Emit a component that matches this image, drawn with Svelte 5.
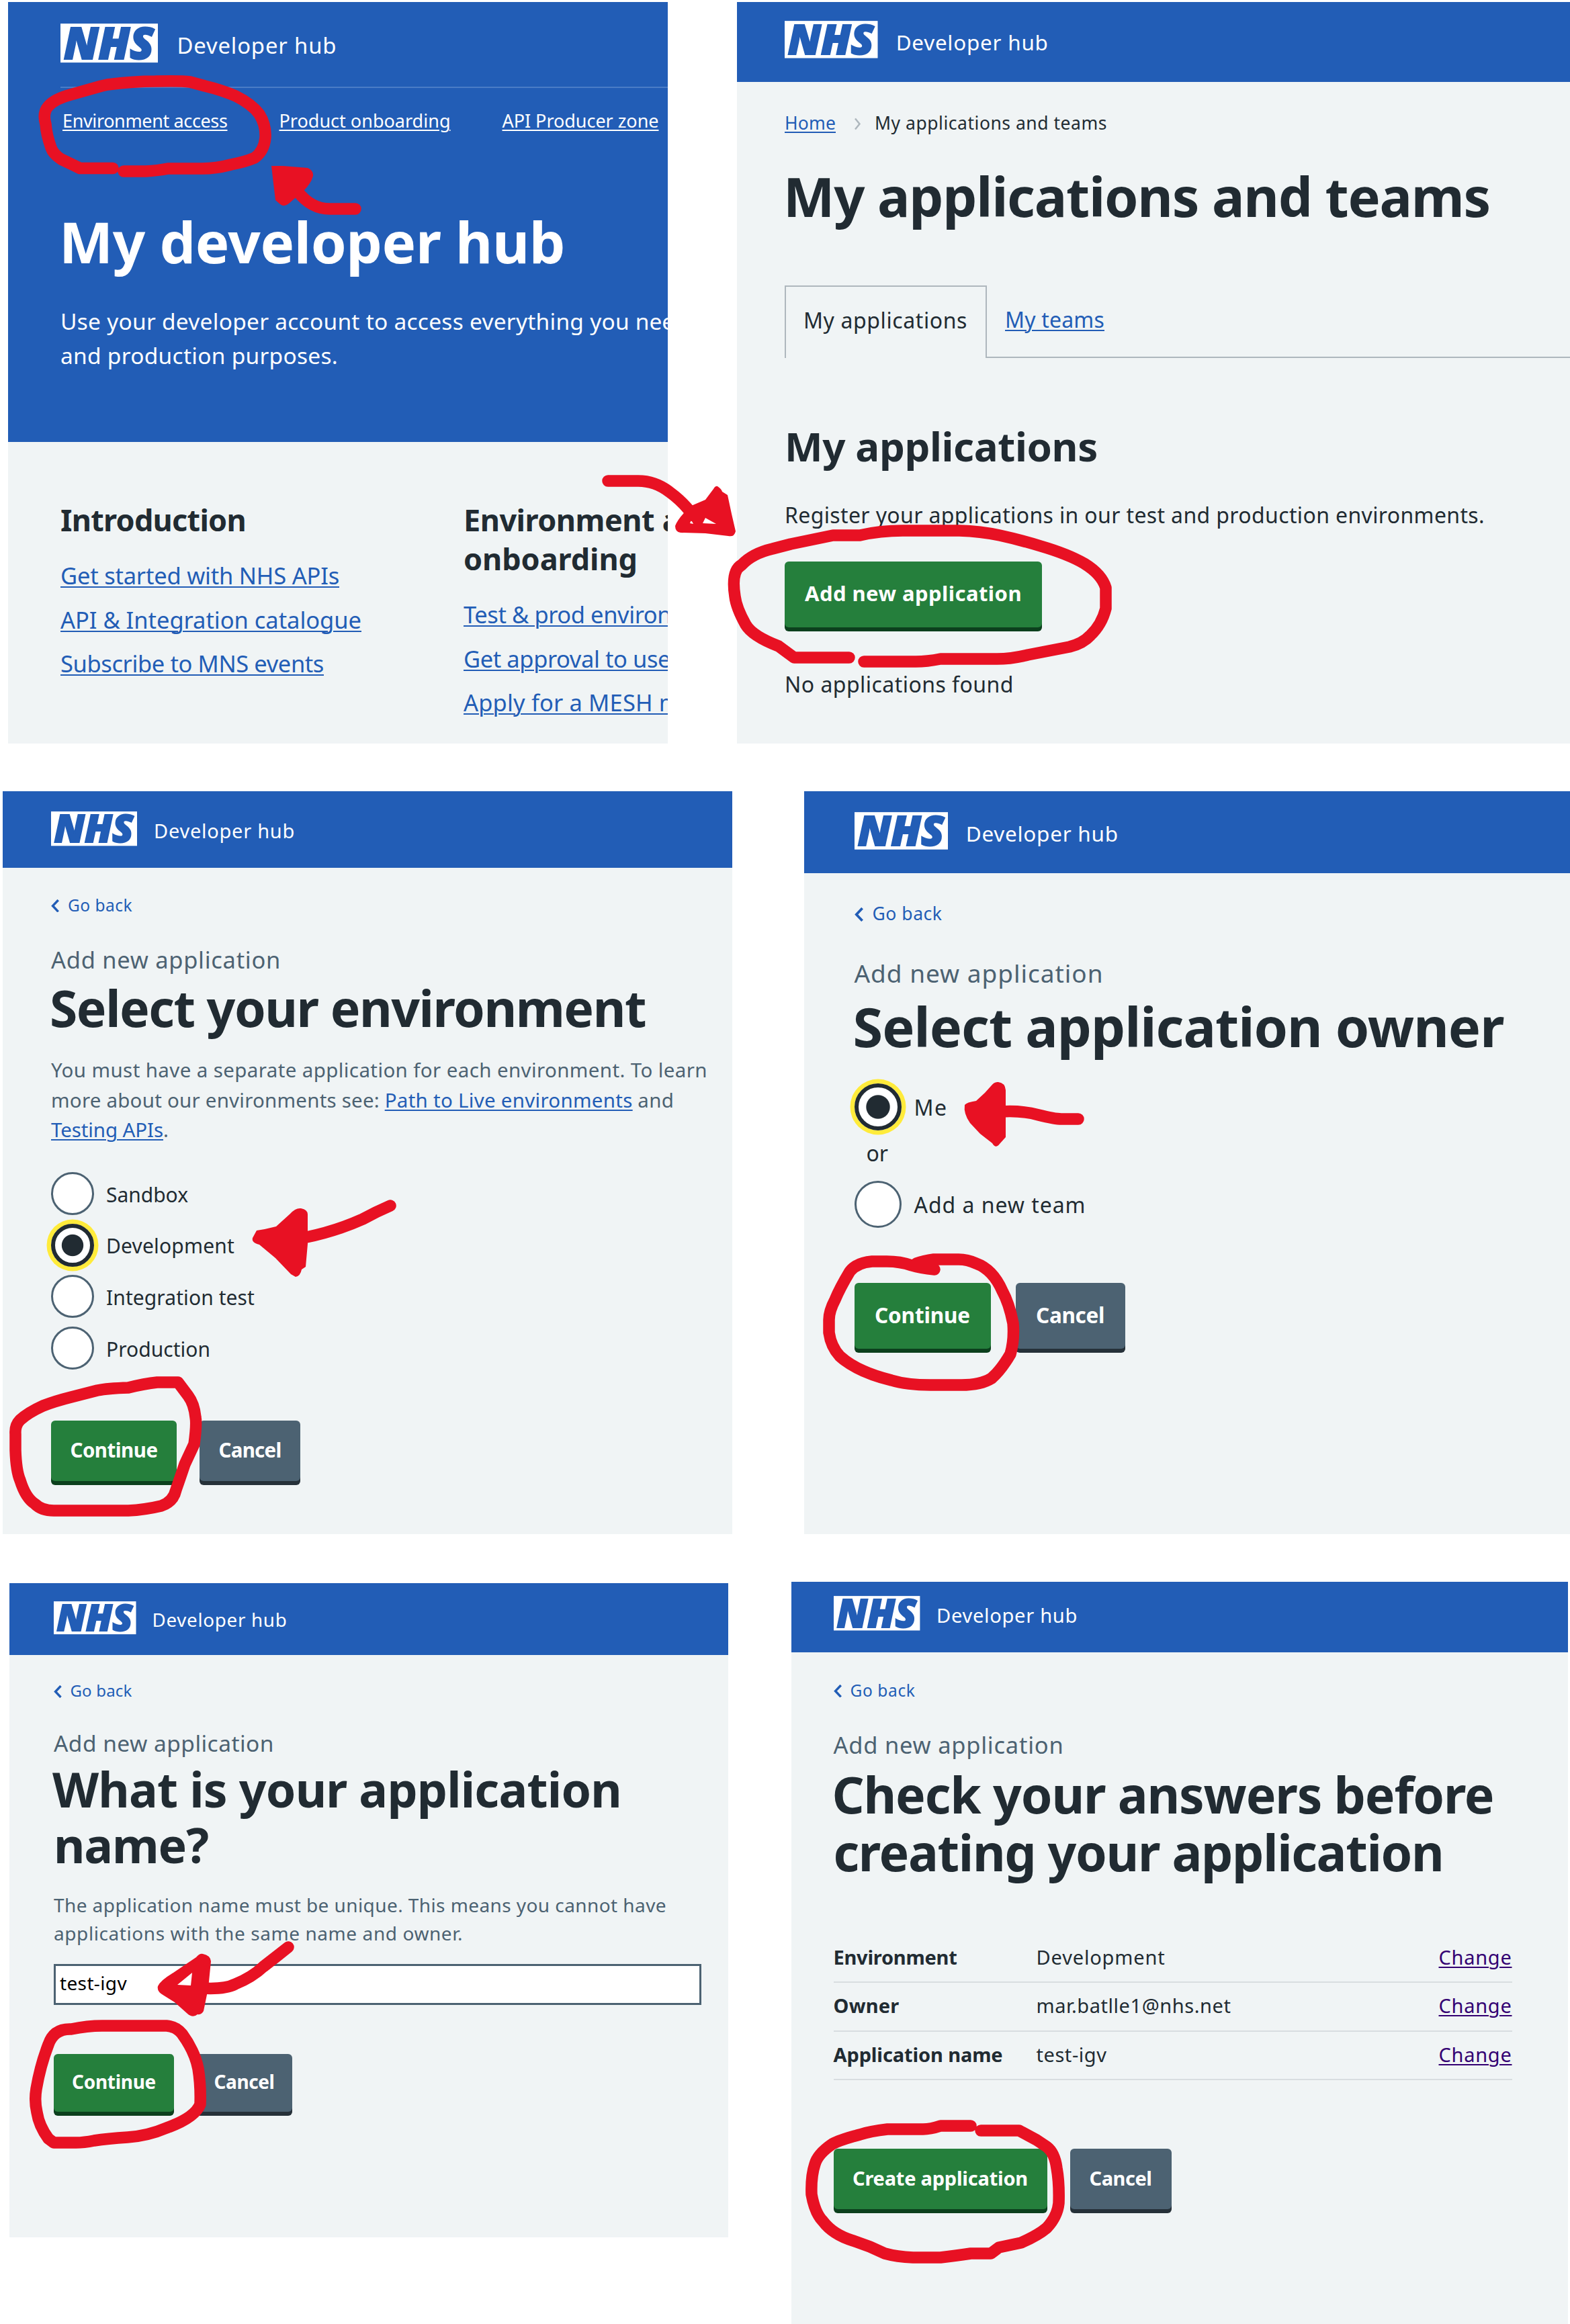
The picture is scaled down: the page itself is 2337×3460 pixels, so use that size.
<script lang="ts">
  // Tracks a line of text out (or in) so that it spans the given measure.
  function fit(node: HTMLElement, width: number) {
    const natural = node.getBoundingClientRect().width;
    const count = (node.textContent ?? '').length;
    node.style.letterSpacing = `${(width - natural) / count}px`;
  }

  const introLinks = [
    { label: 'Get started with NHS APIs', width: 415 },
    { label: 'API & Integration catalogue', width: 448 },
    { label: 'Subscribe to MNS events', width: 392 }
  ];

  const accessLinks = [
    { label: 'Test & prod environments', width: 409 },
    { label: 'Get approval to use our APIs', width: 450 },
    { label: 'Apply for a MESH mailbox', width: 421 }
  ];

  const environments = [
    { label: 'Sandbox', width: 122, checked: false },
    { label: 'Development', width: 191, checked: true },
    { label: 'Integration test', width: 221, checked: false },
    { label: 'Production', width: 155, checked: false }
  ];

  const answers = [
    { key: 'Environment', keyWidth: 184, value: 'Development', valueWidth: 192 },
    { key: 'Owner', keyWidth: 98, value: 'mar.batlle1@nhs.net', valueWidth: 290 },
    { key: 'Application name', keyWidth: 252, value: 'test-igv', valueWidth: 105 }
  ];

  // Hand-drawn marker strokes
  const strokes = [
    'M168 250.500H119L91 237Q79 229 76 220Q69 200 68 185Q63 168 72 158Q82 147 105 141L151 128L160 126Q200 121 231 121Q270 120 283 122L305 128Q330 134 351 143Q375 155 386 170Q396 186 395 205Q393 225 379 235Q365 241 344 245Q322 251 301 251H250Q235 254 217 255H184',
    'M443 285Q463 311 491 311H529',
    'M905 716H950Q975 716 996 732Q1018 748 1032 768',
    'M1264 979H1182L1159 962Q1120 947 1110 930Q1096 905 1094 888Q1088 850 1104 841Q1120 824 1150 817L1177 810L1240 797H1280Q1310 790 1344 790H1428Q1460 791 1488 797Q1520 804 1549 813Q1590 825 1614 839Q1640 855 1646 875V906Q1640 930 1623 946Q1612 958 1592 963L1530 975Q1505 981 1484 981H1400Q1380 985 1363 985H1286',
    'M265 2058H234Q215 2060 191 2066Q160 2067 145 2070L106 2080Q82 2086 64 2093Q42 2103 30 2114Q22 2122 23 2135V2159Q24 2190 30 2204Q38 2230 52 2239Q62 2249 80 2249H191Q215 2248 240 2242Q258 2236 262 2218Q270 2195 275 2180L289 2150Q293 2120 291 2110Q289 2090 280 2078Z',
    'M581 1795Q560 1804 540 1815Q500 1833 456 1842',
    'M1391 1890Q1370 1888 1357 1884Q1340 1878 1320 1878H1298Q1275 1880 1265 1893Q1250 1918 1243 1935Q1234 1952 1234 1965V1984Q1237 2005 1250 2019Q1275 2042 1327 2055Q1350 2062 1385 2062H1431Q1460 2062 1476 2052Q1490 2040 1504 2016Q1510 1995 1508 1970Q1502 1940 1492 1922Q1478 1890 1453 1881Q1440 1875 1427 1875H1390Q1375 1877 1364 1881',
    'M1490 1655Q1520 1653 1546 1660Q1570 1666 1580 1666H1605',
    'M106 3021Q130 3016 152 3016H248Q262 3017 271 3028Q290 3054 295 3080Q299 3105 298 3133Q290 3153 248 3168Q220 3180 190 3182Q160 3184 140 3187Q125 3190 113 3190H80L72 3184Q58 3165 55 3145Q51 3128 54 3110Q60 3075 72 3044Q80 3020 106 3021',
    'M300 2960Q335 2962 350 2954Q375 2944 392 2928L410 2914L429 2899',
    'M1445 3165H1400Q1385 3170 1374 3170H1321Q1295 3173 1280 3178Q1250 3186 1239 3192Q1217 3207 1213 3222Q1207 3240 1208 3267Q1213 3295 1225 3307Q1240 3327 1270 3336L1295 3345L1317 3355Q1335 3360 1359 3361H1400Q1425 3358 1445 3355H1475L1487 3346L1520 3339Q1545 3328 1558 3317Q1574 3300 1576 3280Q1577 3250 1573 3228Q1570 3205 1558 3196L1543 3186L1517 3172H1460'
  ];

  const heads = [
    'M404 247H421L458 250Q467 254 466 262Q463 273 452 284L438 296L430 303Q423 309 417 304L410 298L407 273Z',
    'M1068 724Q1074 728 1075 732L1083 737L1089 765L1095 791Q1093 800 1084 798L1050 794L1013 793Q1005 792 1005 783Q1010 770 1029 753L1050 744L1062 728Q1065 723 1068 724ZM1050 771L1046 779L1066 780ZM1029 774L1027 779L1032 780Z',
    'M448 1799Q458 1801 458 1808V1852L455 1886L449 1890Q447 1900 440 1901L433 1897L410 1873L386 1853Q374 1850 376 1843L382 1832L394 1830L411 1826L432 1807Q440 1798 448 1799Z',
    'M1486 1611Q1496 1612 1497 1623V1693L1488 1703Q1482 1711 1477 1702L1459 1688L1444 1672Q1434 1658 1436 1645Q1439 1641 1453 1639L1466 1627L1475 1617Q1480 1610 1486 1611Z',
    'M302 2909Q313 2911 314 2920L310 2960L303 2994Q300 3000 294 2999Q287 3005 279 2998L260 2981L244 2971Q233 2965 235 2957Q239 2948 258 2937L292 2914Q297 2908 302 2909ZM286 2937L264 2955L284 2956Z'
  ];
</script>

{#snippet brand(width: number)}
  <div class="brand">
    <svg class="logo" viewBox="0 0 145 58" role="img" aria-label="NHS">
      <rect width="145" height="58" fill="#fff" />
      <text x="5" y="52.500" textLength="134" lengthAdjust="spacingAndGlyphs">NHS</text>
    </svg>
    <span class="service fit" use:fit={width}>Developer hub</span>
  </div>
{/snippet}

{#snippet goBack(width: number)}
  <a class="back">
    <svg class="chev" viewBox="0 0 12 19"><path d="M10.500 1L2.500 9.500L10.500 18" /></svg>
    <span class="fit" use:fit={width}>Go back</span>
  </a>
{/snippet}

{#snippet radio(label: string, width: number, checked: boolean)}
  <div class="option">
    <span class="radio" class:checked></span>
    <span class="label fit" use:fit={width}>{label}</span>
  </div>
{/snippet}

{#snippet button(label: string, width: number, kind: string)}
  <div class="btn {kind}"><span class="fit" use:fit={width}>{label}</span></div>
{/snippet}

<div class="board">
  <div class="row first">
    <section class="panel p1">
      <header class="hero">
        {@render brand(238)}
        <nav>
          <a class="fit" use:fit={245.5}>Environment access</a>
          <a class="fit" use:fit={255}>Product onboarding</a>
          <a class="fit" use:fit={233}>API Producer zone</a>
        </nav>
        <h1><span class="fit" use:fit={753}>My developer hub</span></h1>
        <p>
          <span class="fit" use:fit={847}>Use your developer account to access everything you</span> need for test<br />
          <span class="fit" use:fit={413}>and production purposes.</span>
        </p>
      </header>
      <div class="columns">
        <div class="col">
          <h2><span class="fit" use:fit={276}>Introduction</span></h2>
          <ul>
            {#each introLinks as link}
              <li><a class="fit" use:fit={link.width}>{link.label}</a></li>
            {/each}
          </ul>
        </div>
        <div class="col">
          <h2>
            <span class="fit" use:fit={284}>Environment</span> access<br />
            <span class="fit" use:fit={259}>onboarding</span>
          </h2>
          <ul>
            {#each accessLinks as link}
              <li><a class="fit" use:fit={link.width}>{link.label}</a></li>
            {/each}
          </ul>
        </div>
      </div>
    </section>

    <section class="panel p2">
      <header>{@render brand(227)}</header>
      <main>
        <div class="crumbs">
          <a class="fit" use:fit={76}>Home</a>
          <svg viewBox="0 0 12 19"><path d="M3 1.500L9.500 9.500L3 17.500" /></svg>
          <span class="fit" use:fit={346}>My applications and teams</span>
        </div>
        <h1><span class="fit" use:fit={1052}>My applications and teams</span></h1>
        <div class="tabs">
          <div class="tab"><span class="fit" use:fit={244}>My applications</span></div>
          <div class="rest"><a class="fit" use:fit={148}>My teams</a></div>
        </div>
        <h2><span class="fit" use:fit={466}>My applications</span></h2>
        <p class="register"><span class="fit" use:fit={1042}>Register your applications in our test and production environments.</span></p>
        <div class="actions">{@render button('Add new application', 323, 'primary')}</div>
        <p class="none"><span class="fit" use:fit={341}>No applications found</span></p>
      </main>
    </section>
  </div>

  <div class="row second">
    <section class="panel p3">
      <header>{@render brand(210)}</header>
      <main>
        {@render goBack(96)}
        <div class="caption"><span class="fit" use:fit={342}>Add new application</span></div>
        <h1><span class="fit" use:fit={887}>Select your environment</span></h1>
        <p class="hint">
          <span class="fit" use:fit={977}>You must have a separate application for each environment. To learn</span><br />
          <span class="fit" use:fit={489}>more about our environments see:</span>
          <a class="fit" use:fit={369}>Path to Live environments</a>
          <span class="fit" use:fit={54}>and</span><br />
          <a class="fit" use:fit={167}>Testing APIs</a>.
        </p>
        <div class="options">
          {#each environments as env}
            {@render radio(env.label, env.width, env.checked)}
          {/each}
        </div>
        <div class="actions">
          {@render button('Continue', 130, 'primary')}
          {@render button('Cancel', 93, 'secondary')}
        </div>
      </main>
    </section>

    <section class="panel p4">
      <header>{@render brand(227)}</header>
      <main>
        {@render goBack(104)}
        <div class="caption"><span class="fit" use:fit={371}>Add new application</span></div>
        <h1><span class="fit" use:fit={969}>Select application owner</span></h1>
        <div class="options">
          {@render radio('Me', 50, true)}
          <span class="or">or</span>
          {@render radio('Add a new team', 256, false)}
        </div>
        <div class="actions">
          {@render button('Continue', 142, 'primary')}
          {@render button('Cancel', 102, 'secondary')}
        </div>
      </main>
    </section>
  </div>

  <div class="row third">
    <section class="panel p5">
      <header>{@render brand(201)}</header>
      <main>
        {@render goBack(92)}
        <div class="caption"><span class="fit" use:fit={328}>Add new application</span></div>
        <h1>
          <span class="fit" use:fit={847}>What is your application</span><br />
          <span class="fit" use:fit={230}>name?</span>
        </h1>
        <p class="hint">
          <span class="fit" use:fit={912}>The application name must be unique. This means you cannot have</span><br />
          <span class="fit" use:fit={609}>applications with the same name and owner.</span>
        </p>
        <div class="field"><span class="fit" use:fit={100}>test-igv</span></div>
        <div class="actions">
          {@render button('Continue', 125, 'primary')}
          {@render button('Cancel', 90, 'secondary')}
        </div>
      </main>
    </section>

    <section class="panel p6">
      <header>{@render brand(210)}</header>
      <main>
        {@render goBack(97)}
        <div class="caption"><span class="fit" use:fit={343}>Add new application</span></div>
        <h1>
          <span class="fit" use:fit={985}>Check your answers before</span><br />
          <span class="fit" use:fit={908}>creating your application</span>
        </h1>
        <dl>
          {#each answers as row}
            <div class="answer">
              <dt><span class="fit" use:fit={row.keyWidth}>{row.key}</span></dt>
              <dd><span class="fit" use:fit={row.valueWidth}>{row.value}</span></dd>
              <dd class="change"><a class="fit" use:fit={109}>Change</a></dd>
            </div>
          {/each}
        </dl>
        <div class="actions">
          {@render button('Create application', 261, 'primary')}
          {@render button('Cancel', 93, 'secondary')}
        </div>
      </main>
    </section>
  </div>

  <svg class="ink" viewBox="0 0 2337 3460">
    {#each strokes as d}<path class="stroke" {d} />{/each}
    {#each heads as d}<path class="head" {d} />{/each}
  </svg>
</div>

<style>
  :global(body) {
    margin: 0;
    background: #fff;
  }
  .board {
    position: relative;
    box-sizing: border-box;
    width: 2337px;
    height: 3460px;
    padding-top: 3px;
    overflow: hidden;
    font-family: 'Noto Sans', 'Open Sans', sans-serif;
    font-weight: 450;
    line-height: 1.2;
    color: #212b32;
  }
  .row {
    display: flex;
    align-items: flex-start;
  }
  .panel {
    flex: none;
    box-sizing: border-box;
    overflow: hidden;
    background: #f0f4f5;
  }
  .second { margin-top: 71px; }
  .third { margin-top: 71px; }
  h1, h2, p, ul, dl, dd { margin: 0; padding: 0; }
  h1, h2 { font-weight: 700; }
  h1 { text-indent: -2px; }
  ul { list-style: none; }
  a {
    color: #225db6;
    text-decoration: underline;
    text-decoration-thickness: 2px;
    text-underline-offset: 3px;
  }
  .fit {
    display: inline-block;
    white-space: pre;
    text-indent: 0;
  }

  header {
    box-sizing: border-box;
    background: #225db6;
    color: #fff;
  }
  .brand {
    display: flex;
    align-items: flex-start;
    gap: 0.196em;
    font-size: var(--logo);
  }
  .logo {
    width: 1em;
    height: 0.402em;
    flex: none;
    overflow: visible;
  }
  .logo text {
    font: italic 800 65px 'Open Sans', 'Noto Sans', sans-serif;
    fill: #225db6;
    stroke: #225db6;
    stroke-width: 2.2px;
  }
  .service {
    font-size: 0.2265em;
    margin-top: 0.4em;
  }

  .back {
    display: flex;
    align-items: center;
    text-decoration: none;
  }
  .chev {
    width: 0.5em;
    height: 0.79em;
    margin-right: 0.52em;
    margin-top: 0.08em;
  }
  .chev path {
    fill: none;
    stroke: #225db6;
    stroke-width: 3.4;
  }
  .caption, .hint { color: #4c6272; }

  .options {
    display: flex;
    flex-direction: column;
  }
  .option {
    display: flex;
    align-items: center;
  }
  .radio {
    box-sizing: border-box;
    flex: none;
    width: var(--radio);
    height: var(--radio);
    border: 3px solid #4c6272;
    border-radius: 50%;
    background: #fff;
  }
  .radio.checked {
    border: 6.5px solid #212b32;
    box-shadow: 0 0 0 6.5px #ffeb3b;
    background: radial-gradient(circle, #212b32 0 calc(var(--radio) * 0.245), #fff calc(var(--radio) * 0.26));
  }
  .label { margin: 3px 0 0 18px; }

  .actions { display: flex; }
  .btn {
    box-sizing: border-box;
    display: flex;
    align-items: center;
    justify-content: center;
    border-radius: 6px;
    color: #fff;
    font-weight: 700;
    padding-bottom: 2px;
  }
  .primary {
    background: #257f3c;
    box-shadow: 0 6px 0 #0c401d;
  }
  .secondary {
    background: #4c6272;
    box-shadow: 0 6px 0 #263139;
  }

  /* My developer hub */
  .p1 {
    --logo: 145px;
    width: 982px;
    height: 1104px;
    margin-left: 12px;
  }
  .hero {
    height: 655px;
    padding: 32px 0 0 78px;
  }
  .p1 nav {
    display: flex;
    gap: 77px;
    margin-top: 36px;
    padding: 33px 0 0 3px;
    border-top: 2px solid #4a7cc6;
    font-size: 27px;
  }
  .p1 nav a {
    flex: none;
    color: #fff;
  }
  .p1 h1 {
    margin-top: 111px;
    font-size: 85px;
  }
  .p1 p {
    margin-top: 43px;
    font-size: 33.5px;
    line-height: 51.5px;
    white-space: nowrap;
  }
  .columns {
    display: flex;
    padding: 87px 0 0 78px;
  }
  .col {
    flex: none;
    width: 600px;
    white-space: nowrap;
  }
  .p1 h2 {
    margin-bottom: 21px;
    font-size: 45px;
    line-height: 58px;
  }
  .p1 li {
    font-size: 34.5px;
    line-height: 65.5px;
    height: 65.5px;
  }

  /* My applications and teams */
  .p2 {
    --logo: 138.5px;
    width: 1240px;
    height: 1104px;
    margin-left: 103px;
  }
  .p2 header {
    height: 119px;
    padding: 28px 0 0 71px;
  }
  .p2 main { padding: 46px 0 0 71px; }
  .crumbs {
    display: flex;
    align-items: center;
    height: 31px;
    font-size: 26.5px;
  }
  .crumbs svg {
    width: 12px;
    height: 19px;
    margin: 2px 20px 0 26px;
  }
  .crumbs path {
    fill: none;
    stroke: #aeb7bd;
    stroke-width: 2.5;
  }
  .p2 h1 {
    margin-top: 44px;
    font-size: 81px;
  }
  .tabs {
    display: flex;
    height: 108px;
    margin-top: 85px;
    font-size: 32px;
  }
  .tab {
    box-sizing: border-box;
    width: 301px;
    padding: 31px 0 0 26px;
    border: 2px solid #aeb7bd;
    border-bottom: 0;
  }
  .rest {
    flex: 1;
    padding: 32px 0 0 27px;
    border-bottom: 2px solid #aeb7bd;
  }
  .p2 h2 {
    margin-top: 95px;
    font-size: 60px;
  }
  .p2 p { font-size: 32px; }
  .register { margin-top: 48px; }
  .p2 .btn {
    width: 383px;
    height: 98px;
    font-size: 31px;
  }
  .p2 .actions { margin-top: 49px; }
  .none { margin-top: 66px; }

  /* Select your environment */
  .p3 {
    --logo: 128px;
    --radio: 64px;
    width: 1086px;
    height: 1106px;
    margin-left: 4px;
  }
  .p3 header {
    height: 114px;
    padding: 30px 0 0 72px;
  }
  .p3 main { padding: 41px 0 0 72px; }
  .p3 .back { font-size: 24.5px; }
  .p3 .caption {
    margin-top: 45.5px;
    font-size: 34.5px;
  }
  .p3 h1 {
    margin-top: 6px;
    font-size: 75px;
  }
  .p3 .hint {
    margin-top: 26px;
    font-size: 29.5px;
    line-height: 44.6px;
    white-space: nowrap;
  }
  .p3 .options {
    gap: 12.7px;
    margin-top: 40px;
    font-size: 30px;
  }
  .p3 .actions {
    gap: 34px;
    margin-top: 76px;
    font-size: 29.5px;
  }
  .p3 .btn { height: 90px; }
  .p3 .primary { width: 187px; }
  .p3 .secondary { width: 150px; }

  /* Select application owner */
  .p4 {
    --logo: 139px;
    --radio: 70px;
    width: 1140px;
    height: 1106px;
    margin-left: 107px;
  }
  .p4 header {
    height: 122px;
    padding: 31px 0 0 74.5px;
  }
  .p4 main { padding: 45px 0 0 74.5px; }
  .p4 .back { font-size: 26.5px; }
  .p4 .caption {
    margin-top: 50.5px;
    font-size: 37px;
  }
  .p4 h1 {
    margin-top: 7px;
    font-size: 81px;
  }
  .p4 .options {
    margin-top: 37px;
    font-size: 32px;
  }
  .p4 .label { margin: 2px 0 0 19px; }
  .or { margin: 15.5px 0 21px 18px; }
  .p4 .actions {
    gap: 37px;
    margin-top: 82px;
    font-size: 31.5px;
  }
  .p4 .btn { height: 98px; }
  .p4 .primary { width: 203px; }
  .p4 .secondary { width: 163px; }

  /* What is your application name? */
  .p5 {
    --logo: 122.5px;
    width: 1070px;
    height: 974px;
    margin: 2px 0 0 14px;
  }
  .p5 header {
    height: 107px;
    padding: 27px 0 0 66px;
  }
  .p5 main { padding: 39px 0 0 66px; }
  .p5 .back { font-size: 24px; }
  .p5 .caption {
    margin-top: 43.5px;
    font-size: 33.5px;
  }
  .p5 h1 {
    margin-top: 8px;
    font-size: 71.5px;
    line-height: 82.6px;
  }
  .p5 .hint {
    margin-top: 26px;
    font-size: 28px;
    line-height: 42.3px;
  }
  .field {
    box-sizing: border-box;
    display: flex;
    align-items: center;
    width: 964px;
    height: 61px;
    margin-top: 25px;
    padding: 0 0 3px 6px;
    border: 3px solid #4c6272;
    background: #fff;
    color: #000;
    font-size: 28px;
  }
  .p5 .actions {
    gap: 33px;
    margin-top: 73px;
    font-size: 28px;
  }
  .p5 .btn { height: 86px; }
  .p5 .primary { width: 179px; }
  .p5 .secondary { width: 143px; }

  /* Check your answers */
  .p6 {
    --logo: 128.4px;
    width: 1156px;
    height: 1106px;
    margin-left: 94px;
  }
  .p6 header {
    height: 105px;
    padding: 21px 0 0 62.5px;
  }
  .p6 main { padding: 42px 0 0 62.5px; }
  .p6 .back { font-size: 24.5px; }
  .p6 .caption {
    margin-top: 46px;
    font-size: 34.5px;
  }
  .p6 h1 {
    margin-top: 9px;
    font-size: 75px;
    line-height: 86px;
  }
  .p6 dl {
    width: 1010px;
    margin-top: 80px;
    font-size: 29px;
  }
  .answer {
    box-sizing: border-box;
    display: grid;
    grid-template-columns: 302px 1fr auto;
    height: 72.4px;
    padding-top: 17px;
    border-bottom: 2px solid #d8dde0;
  }
  dt { font-weight: 700; }
  .change a { color: #330072; }
  .p6 .actions {
    gap: 34px;
    margin-top: 102px;
    font-size: 29px;
  }
  .p6 .btn { height: 90px; }
  .p6 .primary { width: 318px; }
  .p6 .secondary { width: 151px; }

  .ink {
    position: absolute;
    inset: 0;
    width: 2337px;
    height: 3460px;
    pointer-events: none;
  }
  .stroke {
    fill: none;
    stroke: #e81123;
    stroke-width: 17.5;
    stroke-linecap: round;
    stroke-linejoin: round;
  }
  .head {
    fill: #e81123;
    fill-rule: evenodd;
  }
</style>
